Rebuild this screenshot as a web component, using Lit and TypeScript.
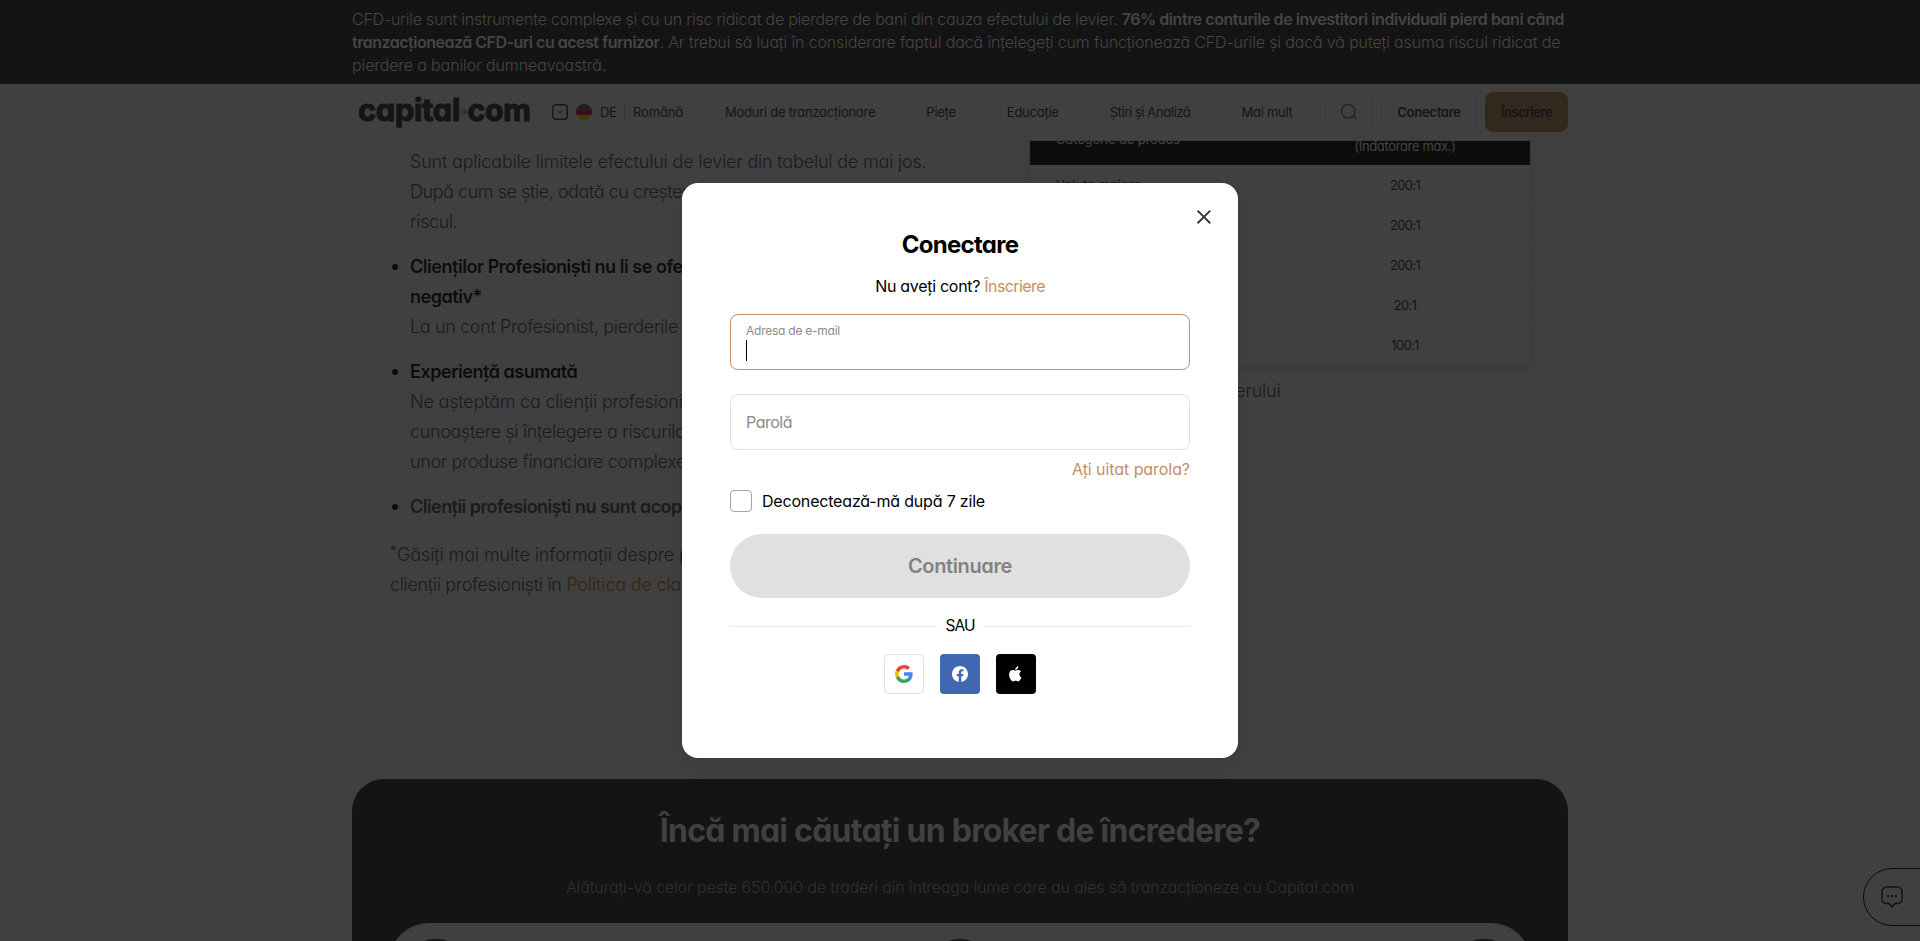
import { LitElement, html, css, svg } from "lit";
import { customElement } from "lit/decorators.js";

const NAV = ["Moduri de tranzacționare", "Piețe", "Educație", "Știri și Analiză", "Mai mult"];
const ROWS: [string, string][] = [
  ["Valute majore", "200:1"],
  ["Indici", "200:1"],
  ["Mărfuri", "200:1"],
  ["Acțiuni", "20:1"],
  ["Obligațiuni", "100:1"],
];

const base = css`
  * { box-sizing: border-box; }
  :host {
    box-sizing: border-box;
    font-family: Inter, "Open Sans", sans-serif;
    font-feature-settings: "cv11";
  }
`;

@customElement("risk-banner")
class RiskBanner extends LitElement {
  static styles = [base, css`
    :host { display: block; height: 84px; padding: 8px 352px 0; background: #141414; color: #454545; font-size: 16px; font-weight: 300; line-height: 22.8px; white-space: nowrap; }
    .l1 { letter-spacing: -0.0142em; }
    .l1 b { letter-spacing: -0.0275em; }
    .l2 { letter-spacing: -0.0092em; }
    .l2 b { letter-spacing: -0.0306em; }
    .l3 { letter-spacing: -0.0075em; }
    b { font-weight: 600; }
  `];
  render() {
    return html`
      <div class="l1">CFD-urile sunt instrumente complexe și cu un risc ridicat de pierdere de bani din cauza efectului de levier. <b>76% dintre conturile de investitori individuali pierd bani când</b></div>
      <div class="l2"><b>tranzacționează CFD-uri cu acest furnizor</b>. Ar trebui să luați în considerare faptul dacă înțelegeți cum funcționează CFD-urile și dacă vă puteți asuma riscul ridicat de</div>
      <div class="l3">pierdere a banilor dumneavoastră.</div>`;
  }
}

@customElement("site-header")
class SiteHeader extends LitElement {
  static styles = [base, css`
    :host { display: flex; align-items: center; height: 57px; padding: 0 352px; background: #404040; border-bottom: 1px solid #3a3a3a; color: #151515; font-size: 13px; letter-spacing: -0.25px; white-space: nowrap; }
    .logo { display: block; margin-left: 7px; }
    .locale { display: flex; align-items: center; margin-left: 22px; }
    .locale svg { display: block; }
    .flag { margin: 0 8px; }
    .code { width: 24px; letter-spacing: -0.5px; }
    .lang { border-left: 1px solid #343434; padding-left: 8px; line-height: 16px; width: 101px; letter-spacing: -0.15px; }
    nav { display: flex; gap: 51px; width: 600px; }
    .i3 { letter-spacing: -0.4px; }
    .search { display: grid; place-items: center; width: 48px; }
    .btn { display: flex; align-items: center; justify-content: center; height: 40px; border: 1px solid #3a3a3a; border-radius: 8px; }
    .login { width: 96px; margin: 0 8px; font-weight: 600; padding-bottom: 1px; }
    .join { width: 83px; background: #33281e; border-color: #33281e; font-weight: 600; padding-bottom: 1px; letter-spacing: -0.45px; }
  `];
  render() {
    return html`
      <svg class="logo" width="171" height="40" viewBox="0 0 171 40">
        <g fill="#151515" stroke="#151515" stroke-width="1.2" font-family="Inter" font-weight="700" font-size="31">
          <text x="-1" y="28.5" textLength="102" lengthAdjust="spacingAndGlyphs">capital</text>
          <text x="108.5" y="28.5" textLength="63" lengthAdjust="spacingAndGlyphs">com</text>
        </g>
        <circle cx="105" cy="20" r="3" fill="#3b2e25" />
      </svg>
      <div class="locale">
        <svg width="16" height="16"><rect x=".75" y=".75" width="14.5" height="14.5" rx="3" fill="none" stroke="#171717" stroke-width="1.4"/><path d="M6 7l2 2 2-2" fill="none" stroke="#171717"/></svg>
        <svg class="flag" width="16" height="16"><clipPath id="c"><circle cx="8" cy="8" r="8"/></clipPath><g clip-path="url(#c)"><path fill="#1f1f1f" d="M0 0h16v5.5H0z"/><path fill="#3c0d12" d="M0 5.5h16v5.5H0z"/><path fill="#40380f" d="M0 11h16v5H0z"/></g></svg>
        <span class="code">DE</span><span class="lang">Română</span>
      </div>
      <nav>${NAV.map((n, i) => html`<span class="i${i}">${n}</span>`)}</nav>
      <div class="btn search"><svg width="18" height="18" fill="none" stroke="#1f1f1f" stroke-width="1.2"><circle cx="8.3" cy="8.2" r="6.8"/><path d="M13.3 13l2.7 2.8"/></svg></div>
      <div class="btn login">Conectare</div>
      <div class="btn join">Înscriere</div>`;
  }
}

@customElement("page-content")
class PageContent extends LitElement {
  static styles = [base, css`
    :host { display: grid; grid-template-columns: 640px 500px; height: 638px; padding-left: 390px; white-space: nowrap; overflow: hidden; background: #404040; }
    .text { padding-top: 6px; font-size: 18px; font-weight: 300; line-height: 30px; color: #1b1b1b; }
    ul { margin: 0; padding: 0; list-style: none; }
    li { padding-left: 20px; margin-bottom: 15px; position: relative; }
    li.dot::before { content: ""; position: absolute; left: 2px; top: 12px; width: 6px; height: 6px; border-radius: 50%; background: #0d0d0d; }
    b { font-weight: 600; color: #0d0d0d; letter-spacing: -0.0257em; }
    .soft { color: #1b1b1b; letter-spacing: -0.0304em; }
    .t0 { letter-spacing: -0.0105em; }
    .t1 { letter-spacing: -0.0248em; }
    .t2 { letter-spacing: -0.02em; }
    .t3 { letter-spacing: -0.0186em; }
    .t4 { letter-spacing: -0.0115em; }
    .note { margin-top: 18px; }
    .star { font-size: 14px; line-height: 0; position: relative; top: -5px; }
    .g { letter-spacing: -0.0065em; }
    a { color: #38291d; font-weight: 400; }
    .card { height: 224px; background: #404040; box-shadow: 0 3px 8px rgba(0, 0, 0, 0.1); border-radius: 0 0 4px 4px; font-size: 13px; line-height: 18px; }
    .row, .head { display: grid; grid-template-columns: 250px 250px; }
    .head { height: 24px; background: #0d0d0d; color: #444; overflow: hidden; }
    .head span:first-child { margin-top: -11px; padding-left: 26px; letter-spacing: -0.15px; }
    .head span:last-child { margin-top: -4px; text-align: center; letter-spacing: -0.35px; }
    .row { height: 40px; align-items: center; border-bottom: 1px solid #3b3b3b; color: #151515; }
    .row:last-child { border: 0; }
    .row span:first-child { padding: 1px 0 0 26px; }
    .row span:last-child { text-align: center; letter-spacing: -0.65px; }
    .cap { width: 250.5px; margin-top: 11px; text-align: right; font-size: 18px; line-height: 30px; font-weight: 300; letter-spacing: -0.2px; color: #1b1b1b; }
  `];
  render() {
    return html`
      <div class="text">
        <ul>
          <li><div class="t0">Sunt aplicabile limitele efectului de levier din tabelul de mai jos.</div><div class="t1">După cum se știe, odată cu creșterea</div><div class="t2">riscul.</div></li>
          <li class="dot"><b>Clienților Profesioniști nu li se oferă</b><br /><b>negativ*</b><div class="t2">La un cont Profesionist, pierderile pot</div></li>
          <li class="dot"><b>Experiență asumată</b><div class="t4">Ne așteptăm ca clienții profesioniști</div><div class="t2">cunoaștere și înțelegere a riscurilor</div><div class="t2">unor produse financiare complexe</div></li>
          <li class="dot"><b class="soft">Clienții profesioniști nu sunt acoperiți</b></li>
        </ul>
        <div class="note"><span class="star">*</span><span class="g">Găsiți mai multe informații despre protecția</span></div>
        <div class="t3">clienții profesioniști în <a>Politica de clasificare</a></div>
      </div>
      <div>
        <div class="card">
          <div class="head"><span>Categorie de produs</span><span>(Îndatorare max.)</span></div>
          ${ROWS.map(([a, b]) => html`<div class="row"><span>${a}</span><span>${b}</span></div>`)}
        </div>
        <div class="cap">Limitele efectului levierului</div>
      </div>`;
  }
}

@customElement("broker-panel")
class BrokerPanel extends LitElement {
  static styles = [base, css`
    :host { display: flex; flex-direction: column; align-items: center; height: 162px; margin: 0 352px; border-radius: 32px 32px 0 0; background: #141414; overflow: hidden; white-space: nowrap; }
    h2 { margin: 32px 0 0; font-size: 32px; line-height: 40px; font-weight: 700; letter-spacing: -0.0235em; color: #404040; }
    p { margin: 24px 0 0; font-size: 16px; line-height: 24px; font-weight: 300; letter-spacing: -0.0089em; color: #303030; }
    .sheet { display: flex; justify-content: space-between; width: 1142px; height: 80px; margin-top: 24px; padding: 16px 10px 0; border-radius: 40px 40px 0 0; background: #404040; flex: none; }
    .disc { width: 74px; height: 74px; border-radius: 50%; background: #151515; }
  `];
  render() {
    return html`<h2>Încă mai căutați un broker de încredere?</h2>
      <p>Alăturați-vă celor peste 650.000 de traderi din întreaga lume care au ales să tranzacționeze cu Capital.com</p>
      <div class="sheet"><div class="disc"></div><div class="disc"></div><div class="disc"></div></div>`;
  }
}

const google = svg`<path fill="#4285F4" d="M17.64 9.2c0-.64-.06-1.25-.16-1.84H9v3.48h4.84a4.14 4.14 0 0 1-1.8 2.72v2.26h2.92c1.7-1.57 2.68-3.88 2.68-6.62z"/><path fill="#34A853" d="M9 18c2.43 0 4.47-.8 5.96-2.18l-2.92-2.26c-.8.54-1.84.86-3.04.86-2.34 0-4.33-1.58-5.04-3.71H.96v2.33A9 9 0 0 0 9 18z"/><path fill="#FBBC05" d="M3.96 10.71A5.4 5.4 0 0 1 3.68 9c0-.6.1-1.17.28-1.71V4.96H.96A9 9 0 0 0 0 9c0 1.45.35 2.83.96 4.04l3-2.33z"/><path fill="#EA4335" d="M9 3.58c1.32 0 2.51.45 3.44 1.35l2.58-2.59A9 9 0 0 0 .96 4.96l3 2.33C4.67 5.16 6.66 3.58 9 3.58z"/>`;

@customElement("login-dialog")
class LoginDialog extends LitElement {
  static styles = [base, css`
    :host { display: block; width: 556px; height: 575px; padding: 47px 48px 0; background: #fff; border-radius: 16px; box-shadow: 0 8px 16px rgba(0, 0, 0, 0.08); color: #000; font-size: 16px; white-space: nowrap; }
    .close { position: absolute; left: 514px; top: 26px; }
    h1 { margin: 0; font-size: 24px; line-height: 30px; font-weight: 700; letter-spacing: -0.029em; text-align: center; }
    .sub { margin-top: 14px; line-height: 24px; text-align: center; letter-spacing: -0.018em; }
    .link { color: #c38f63; }
    .sub .link { letter-spacing: -0.0375em; }
    .field { display: flex; flex-direction: column; height: 56px; border: 1px solid #dfdfdf; border-radius: 8px; padding: 0 15px; color: #8a8a8a; }
    .email { margin-top: 16px; border-color: #c38f63; font-size: 12px; line-height: 16px; letter-spacing: -0.0203em; padding-top: 8px; }
    .caret { width: 1px; height: 21px; margin-top: 1px; background: #000; }
    .pass { margin-top: 24px; justify-content: center; letter-spacing: -0.0308em; }
    .forgot { margin-top: 9px; line-height: 20px; text-align: right; letter-spacing: -0.004em; }
    .check { display: flex; align-items: center; gap: 10px; height: 22px; margin-top: 11px; letter-spacing: -0.0116em; }
    .box { width: 22px; height: 22px; border: 1px solid #a5a5ad; border-radius: 4px; }
    .go { display: grid; place-items: center; height: 64px; margin-top: 22px; border-radius: 32px; background: #e0e0e0; color: #828282; font-size: 20px; font-weight: 600; letter-spacing: -0.0187em; }
    .or { display: flex; align-items: center; gap: 8px; margin-top: 18px; font-size: 15.5px; line-height: 20px; letter-spacing: -0.9px; }
    .or::before, .or::after { content: ""; flex: 1; height: 1px; background: #ececec; }
    .social { display: flex; justify-content: center; gap: 16px; margin-top: 18px; }
    .s { display: grid; place-items: center; width: 40px; height: 40px; border-radius: 4px; }
    .gg { border: 1px solid #dfdfdf; }
    .fb { background: #4267b2; }
    .ap { background: #000; }
  `];
  render() {
    return html`
      <svg class="close" width="16" height="16" fill="none" stroke="#383838" stroke-width="2"><path d="M1.6 1.6l12.6 12.6M14.2 1.6L1.6 14.2"/></svg>
      <h1>Conectare</h1>
      <div class="sub">Nu aveți cont? <span class="link">Înscriere</span></div>
      <div class="field email">Adresa de e-mail<div class="caret"></div></div>
      <div class="field pass">Parolă</div>
      <div class="forgot link">Ați uitat parola?</div>
      <div class="check"><span class="box"></span>Deconectează-mă după 7 zile</div>
      <div class="go">Continuare</div>
      <div class="or"><span>SAU</span></div>
      <div class="social">
        <div class="s gg"><svg width="18" height="18" viewBox="0 0 18 18">${google}</svg></div>
        <div class="s fb"><svg width="16" height="16" viewBox="0 0 24 24"><path fill="#fff" d="M24 12.07C24 5.41 18.63 0 12 0S0 5.41 0 12.07c0 6.03 4.39 11.03 10.13 11.93v-8.44H7.08v-3.49h3.05V9.41c0-3.02 1.79-4.69 4.53-4.69 1.31 0 2.68.24 2.68.24v2.97h-1.51c-1.49 0-1.96.93-1.96 1.89v2.25h3.33l-.53 3.49h-2.8V24C19.61 23.1 24 18.1 24 12.07z"/></svg></div>
        <div class="s ap"><svg width="16" height="16" viewBox="0 0 24 24"><path fill="#fff" d="M17.05 12.54c-.03-2.85 2.33-4.23 2.44-4.29-1.33-1.95-3.4-2.21-4.14-2.24-1.76-.18-3.44 1.04-4.33 1.04-.89 0-2.27-1.01-3.73-.99-1.92.03-3.69 1.12-4.68 2.83-2 3.46-.51 8.59 1.43 11.4.95 1.37 2.08 2.92 3.57 2.86 1.43-.06 1.97-.93 3.7-.93s2.22.93 3.73.9c1.54-.03 2.52-1.4 3.46-2.78 1.09-1.59 1.54-3.14 1.57-3.22-.04-.01-3-1.15-3.02-4.58zM14.2 4.17C14.99 3.21 15.52 1.88 15.38.55c-1.14.05-2.52.76-3.34 1.71-.73.85-1.37 2.21-1.2 3.51 1.27.1 2.57-.65 3.36-1.6z"/></svg></div>
      </div>`;
  }
}

@customElement("app-root")
class AppRoot extends LitElement {
  static styles = css`
    :host { display: block; position: relative; height: 941px; overflow: hidden; background: #404040; }
    login-dialog { position: absolute; left: 682px; top: 183px; }
    .chat { box-sizing: border-box; position: absolute; right: -1px; top: 868px; width: 58px; height: 58px; padding: 17px; border: 1px solid #0c0c0c; border-radius: 29px 0 0 29px; }
    .chat svg { display: block; }
  `;
  render() {
    return html`
      <risk-banner></risk-banner>
      <site-header></site-header>
      <page-content></page-content>
      <broker-panel></broker-panel>
      <login-dialog></login-dialog>
      <div class="chat"><svg width="22" height="22" fill="none" stroke="#131313" stroke-width="1.6"><path d="M5.5 1h11A4.5 4.5 0 0 1 21 5.5V13a4.5 4.5 0 0 1-4.5 4.5h-2.3L11 20.800 7.800 17.500H5.500A4.500 4.500 0 0 1 1 13V5.500A4.500 4.500 0 0 1 5.500 1z"/><path d="M6 10h2M10 10h2M14 10h2" stroke-width="2"/></svg></div>`;
  }
}
